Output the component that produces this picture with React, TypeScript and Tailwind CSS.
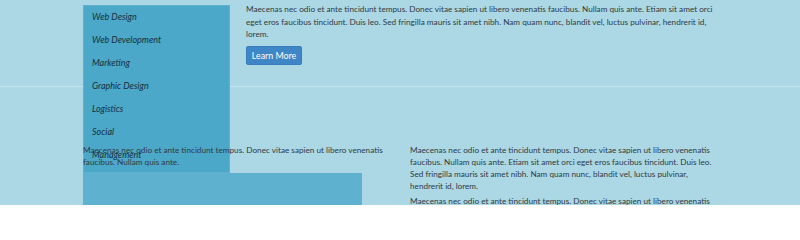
import React from "react"

const lorem =
  "Maecenas nec odio et ante tincidunt tempus. Donec vitae sapien ut libero venenatis faucibus. Nullam quis ante. Etiam sit amet orci eget eros faucibus tincidunt. Duis leo. Sed fringilla mauris sit amet nibh. Nam quam nunc, blandit vel, luctus pulvinar, hendrerit id, lorem."

const menuItems = ["Web Design", "Web Development", "Marketing", "Graphic Design", "Logistics", "Social", "Management"]

export default function App() {
  return (
    <div className="relative w-[800px] h-[205px] overflow-hidden bg-[#acd7e5] text-[#2f3b42] font-['Lato',sans-serif]">
      {/* top band */}
      <div className="h-[87px] border-b border-[#c3e4ee] pl-[246px] pt-[3px]">
        <p className="w-[472px] text-[8.2px] leading-[12.5px]">{lorem}</p>
        <button className="mt-[4px] h-[19px] w-[56px] rounded-[2px] bg-[#3f86c7] text-[8.8px] text-white border border-[#3a7dbb]">
          Learn More
        </button>
      </div>

      {/* dropdown menu */}
      <div className="absolute left-[83px] top-[5px] w-[147px] h-[168px] bg-[#4ba8c8] border border-[#5cb3d1]">
        <ul className="pl-[8px] pt-[5px]">
          {menuItems.map((item) => (
            <li key={item} className="h-[23px] text-[9px] italic leading-[12px] text-[#16303d]">
              {item}
            </li>
          ))}
        </ul>
      </div>

      {/* lower columns */}
      <div className="relative flex gap-[23px] pl-[83px] pt-[57px]">
        <div className="w-[304px]">
          <p className="text-[8.2px] leading-[12px]">
            Maecenas nec odio et ante tincidunt tempus. Donec vitae sapien ut libero venenatis faucibus. Nullam quis ante.
          </p>
          <div className="mt-[5px] w-[279px] h-[40px] bg-[#5eb2cf]" />
        </div>
        <div className="w-[304px] text-[8.2px] leading-[12px]">
          <p>{lorem}</p>
          <p className="mt-[3px]">{lorem}</p>
        </div>
      </div>
    </div>
  )
}
